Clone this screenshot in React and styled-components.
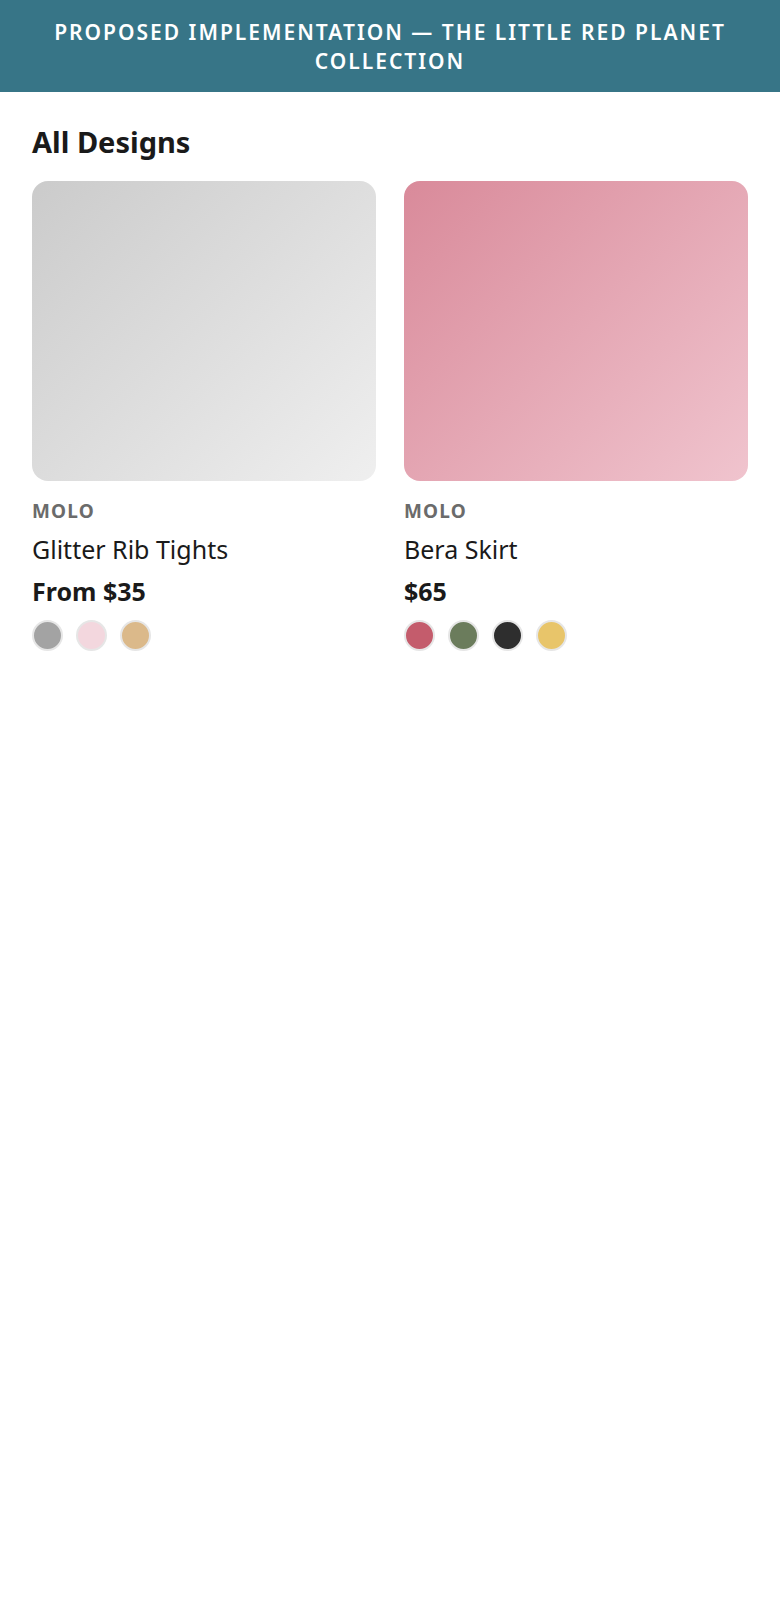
import styled, { createGlobalStyle } from "styled-components";

const products = [
  {
    brand: "Molo",
    name: "Glitter Rib Tights",
    price: "From $35",
    from: "#cbcbcb",
    to: "#efefef",
    colors: ["#a3a3a3", "#f3d7de", "#dbb98a"],
  },
  {
    brand: "Molo",
    name: "Bera Skirt",
    price: "$65",
    from: "#d98a9a",
    to: "#f0c4ce",
    colors: ["#c45c6c", "#6b7c5c", "#2e2e2e", "#e8c56a"],
  },
];

function App() {
  return (
    <>
      <GlobalStyle />
      <Banner>Proposed implementation — The Little Red Planet Collection</Banner>
      <Main>
        <Heading>All Designs</Heading>
        <Grid>
          {products.map((p) => (
            <Card key={p.name}>
              <Photo $from={p.from} $to={p.to} />
              <Brand>{p.brand}</Brand>
              <Name>{p.name}</Name>
              <Price>{p.price}</Price>
              <Swatches>
                {p.colors.map((c) => (
                  <Swatch key={c} $color={c} />
                ))}
              </Swatches>
            </Card>
          ))}
        </Grid>
      </Main>
    </>
  );
}
export default App;

const GlobalStyle = createGlobalStyle`
  body {
    margin: 0;
    background: #fff;
    font-family: "Noto Sans", "Open Sans", sans-serif;
    color: #1a1a1a;
  }
`;

const Banner = styled.header`
  background: #377587;
  color: #fff;
  text-align: center;
  text-transform: uppercase;
  font-size: 21px;
  font-weight: 600;
  letter-spacing: 2px;
  line-height: 29px;
  padding: 18px 30px 16px;
`;

const Main = styled.main`
  padding: 30px 32px;
`;

const Heading = styled.h2`
  margin: 0 0 19px;
  font-size: 29px;
  font-weight: 700;
  line-height: 40px;
`;

const Grid = styled.div`
  display: grid;
  grid-template-columns: 1fr 1fr;
  gap: 28px;
`;

const Card = styled.div`
  display: flex;
  flex-direction: column;
`;

const Photo = styled.div`
  height: 300px;
  border-radius: 16px;
  background: linear-gradient(135deg, ${(p) => p.$from}, ${(p) => p.$to});
`;

const Brand = styled.div`
  margin-top: 18px;
  font-size: 19px;
  font-weight: 700;
  letter-spacing: 1.2px;
  text-transform: uppercase;
  color: #6b6b6b;
  line-height: 24px;
`;

const Name = styled.div`
  margin-top: 10px;
  font-size: 25px;
  line-height: 32px;
`;

const Price = styled.div`
  margin-top: 10px;
  font-size: 25px;
  font-weight: 700;
  line-height: 32px;
`;

const Swatches = styled.div`
  display: flex;
  gap: 13px;
  margin-top: 13px;
`;

const Swatch = styled.span`
  width: 31px;
  height: 31px;
  box-sizing: border-box;
  border-radius: 50%;
  border: 2px solid #e6e6e6;
  background: ${(p) => p.$color};
`;
